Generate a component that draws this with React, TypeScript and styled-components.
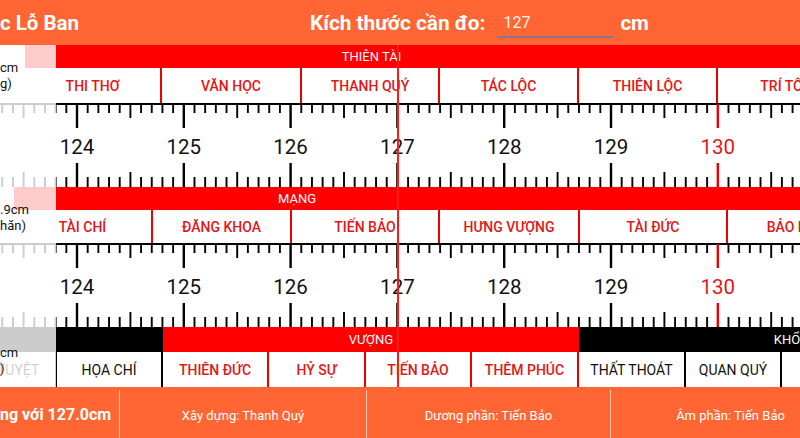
import styled, { createGlobalStyle } from 'styled-components';

const ORANGE = '#ff6633';
const RED = '#ff0000';
const RED_TEXT = '#e01818';

const PX_PER_CM = 106.8;
const cmToX = (v: number) => 77 + (v - 124) * PX_PER_CM;

type Seg = { w: number; bg: string; text?: string };
type Cell = { w: number; text?: string; tone: 'red' | 'black' | 'none' };

const sections: {
  note: string[];
  noteTop: number;
  bandH: number;
  rowH: number;
  rowOffset: number;
  band: Seg[];
  cells: Cell[];
  scale: boolean;
}[] = [
  {
    note: ['cm', 'g)'],
    noteTop: 15,
    bandH: 23,
    rowH: 35,
    rowOffset: 0,
    band: [
      { w: 25, bg: '#fff' },
      { w: 693, bg: RED, text: 'THIÊN TÀI' },
      { w: 695, bg: RED },
    ],
    cells: [
      { w: 25, tone: 'none' },
      { w: 137, text: 'THI THƠ', tone: 'red' },
      { w: 140, text: 'VĂN HỌC', tone: 'red' },
      { w: 138, text: 'THANH QUÝ', tone: 'red' },
      { w: 139, text: 'TÁC LỘC', tone: 'red' },
      { w: 139, text: 'THIÊN LỘC', tone: 'red' },
      { w: 139, text: 'TRÍ TÔN', tone: 'red' },
    ],
    scale: true,
  },
  {
    note: ['.9cm', 'hăn)'],
    noteTop: 15,
    bandH: 23,
    rowH: 33,
    rowOffset: 0,
    band: [
      { w: 14, bg: '#fff' },
      { w: 566, bg: RED, text: 'MẠNG' },
      { w: 600, bg: RED },
    ],
    cells: [
      { w: 14, tone: 'none' },
      { w: 139, text: 'TÀI CHÍ', tone: 'red' },
      { w: 139, text: 'ĐĂNG KHOA', tone: 'red' },
      { w: 148, text: 'TIẾN BẢO', tone: 'red' },
      { w: 140, text: 'HƯNG VƯỢNG', tone: 'red' },
      { w: 148, text: 'TÀI ĐỨC', tone: 'red' },
      { w: 139, text: 'BẢO KHỐ', tone: 'red' },
    ],
    scale: true,
  },
  {
    note: ['cm', ')'],
    noteTop: 18,
    bandH: 25,
    rowH: 35,
    rowOffset: -40,
    band: [
      { w: 163, bg: '#000' },
      { w: 416, bg: RED, text: 'VƯỢNG' },
      { w: 416, bg: '#000', text: 'KHỔ' },
    ],
    cells: [
      { w: 97, text: 'TỬ TUYỆT', tone: 'black' },
      { w: 106, text: 'HỌA CHÍ', tone: 'black' },
      { w: 106, text: 'THIÊN ĐỨC', tone: 'red' },
      { w: 97, text: 'HỶ SỰ', tone: 'red' },
      { w: 106, text: 'TIẾN BẢO', tone: 'red' },
      { w: 107, text: 'THÊM PHÚC', tone: 'red' },
      { w: 107, text: 'THẤT THOÁT', tone: 'black' },
      { w: 96, text: 'QUAN QUÝ', tone: 'black' },
      { w: 106, text: 'KIẾP TÀI', tone: 'black' },
    ],
    scale: false,
  },
];

const GlobalStyle = createGlobalStyle`
  html, body {
    margin: 0;
    width: 800px;
    height: 438px;
    overflow: hidden;
    background: #fff;
    font-family: Roboto, "Noto Sans", "Liberation Sans", sans-serif;
  }
`;

const Page = styled.div`
  width: 800px;
  height: 438px;
  display: flex;
  flex-direction: column;
  overflow: hidden;
`;

const Header = styled.header`
  height: 45px;
  flex: none;
  display: flex;
  align-items: center;
  background: ${ORANGE};
  color: #fff;
`;

const Title = styled.h1`
  flex: none;
  width: 310px;
  margin: 0;
  font-size: 20.5px;
  font-weight: 700;
`;

const FieldLabel = styled.span`
  font-size: 20.8px;
  font-weight: 700;
`;

const SizeInput = styled.input`
  width: 117px;
  margin-left: 12px;
  margin-top: 6px;
  padding: 0 0 4px 6px;
  box-sizing: border-box;
  border: none;
  border-bottom: 2px solid #85778f;
  background: transparent;
  color: #fff3ec;
  font-family: inherit;
  font-size: 16px;
  outline: none;
`;

const Unit = styled.span`
  margin-left: 6px;
  font-size: 20.5px;
  font-weight: 700;
`;

const RulerArea = styled.div`
  position: relative;
  flex: none;
  overflow: hidden;
`;

const Section = styled.section`
  position: relative;
`;

const Band = styled.div<{ $h: number }>`
  display: flex;
  height: ${(p) => p.$h}px;
`;

const BandSeg = styled.div<{ $w: number; $bg: string }>`
  flex: none;
  width: ${(p) => p.$w}px;
  background: ${(p) => p.$bg};
  color: #fff;
  font-size: 13px;
  display: flex;
  align-items: center;
  justify-content: center;
  white-space: nowrap;
`;

const LabelRow = styled.div<{ $h: number; $offset: number }>`
  display: flex;
  height: ${(p) => p.$h}px;
  margin-left: ${(p) => p.$offset}px;
  background: #fff;
`;

const toneColor = { red: RED_TEXT, black: '#111', none: 'transparent' };
const borderColor = { red: '#e00', black: '#000', none: 'transparent' };

const LabelCell = styled.div<{ $w: number; $tone: Cell['tone'] }>`
  flex: none;
  box-sizing: border-box;
  width: ${(p) => p.$w}px;
  border-right: 2px solid ${(p) => borderColor[p.$tone]};
  color: ${(p) => toneColor[p.$tone]};
  font-size: 14px;
  font-weight: ${(p) => (p.$tone === 'red' ? 500 : 400)};
  display: flex;
  align-items: center;
  justify-content: center;
  white-space: nowrap;
`;

const ScaleSvg = styled.svg`
  display: block;
  background: #fff;
`;

const Fade = styled.div`
  position: absolute;
  left: 0;
  top: 0;
  bottom: 0;
  width: 56px;
  background: rgba(255, 255, 255, 0.8);
`;

const SideNote = styled.div<{ $top: number }>`
  position: absolute;
  left: 0;
  top: ${(p) => p.$top}px;
  font-size: 13px;
  line-height: 16px;
  color: #111;
`;

const Indicator = styled.div`
  position: absolute;
  left: 397px;
  top: 0;
  bottom: 0;
  width: 2px;
  background: #ff1a1a;
`;

const Footer = styled.footer`
  flex: 1;
  display: flex;
  background: ${ORANGE};
  color: #fff;
  overflow: hidden;
`;

const FooterCell = styled.div<{ $w: number; $main?: boolean }>`
  flex: none;
  width: ${(p) => p.$w}px;
  box-sizing: border-box;
  display: flex;
  align-items: center;
  justify-content: ${(p) => (p.$main ? 'flex-start' : 'center')};
  font-size: ${(p) => (p.$main ? '16px' : '13px')};
  font-weight: ${(p) => (p.$main ? 700 : 400)};
  white-space: nowrap;
  padding-top: 3px;
  & + & {
    border-left: 1px solid rgba(255, 235, 220, 0.75);
    margin-top: 3px;
  }
`;

function Scale() {
  const ticks = [];
  for (let i = 1230; i <= 1310; i++) {
    const x = cmToX(i / 10);
    if (x < -3 || x > 803) continue;
    const cm = i % 10 === 0;
    const half = i % 5 === 0;
    const color = i === 1300 ? '#e00' : '#000';
    const w = cm ? 2.4 : 1.9;
    const top = cm ? 24 : half ? 14 : 9;
    const bot = cm ? 24 : half ? 15 : 10;
    ticks.push(
      <line key={`t${i}`} x1={x} x2={x} y1={1} y2={1 + top} stroke={color} strokeWidth={w} />,
      <line key={`b${i}`} x1={x} x2={x} y1={84 - bot} y2={84} stroke={color} strokeWidth={w} />
    );
  }
  const nums = [124, 125, 126, 127, 128, 129, 130];
  return (
    <ScaleSvg width={800} height={84} viewBox="0 0 800 84">
      <line x1={0} x2={800} y1={1} y2={1} stroke="#000" strokeWidth={2} />
      {ticks}
      {nums.map((n) => (
        <text
          key={n}
          x={cmToX(n)}
          y={51}
          textAnchor="middle"
          fontSize={20.5}
          fontFamily="Roboto, sans-serif"
          fill={n === 130 ? RED_TEXT : '#111'}
        >
          {n}
        </text>
      ))}
    </ScaleSvg>
  );
}

export default function App() {
  return (
    <Page>
      <GlobalStyle />
      <Header>
        <Title>c Lỗ Ban</Title>
        <FieldLabel>Kích thước cần đo:</FieldLabel>
        <SizeInput readOnly value="127" />
        <Unit>cm</Unit>
      </Header>

      <RulerArea>
        {sections.map((s, idx) => (
          <Section key={idx}>
            <Band $h={s.bandH}>
              {s.band.map((b, i) => (
                <BandSeg key={i} $w={b.w} $bg={b.bg}>
                  {b.text}
                </BandSeg>
              ))}
            </Band>
            <LabelRow $h={s.rowH} $offset={s.rowOffset}>
              {s.cells.map((c, i) => (
                <LabelCell key={i} $w={c.w} $tone={c.tone}>
                  {c.text}
                </LabelCell>
              ))}
            </LabelRow>
            {s.scale && <Scale />}
            <Fade />
            <SideNote $top={s.noteTop}>
              {s.note.map((n) => (
                <div key={n}>{n}</div>
              ))}
            </SideNote>
          </Section>
        ))}
        <Indicator />
      </RulerArea>

      <Footer>
        <FooterCell $w={119} $main>
          ng với 127.0cm
        </FooterCell>
        <FooterCell $w={247}>Xây dựng: Thanh Quý</FooterCell>
        <FooterCell $w={244}>Dương phần: Tiến Bảo</FooterCell>
        <FooterCell $w={240}>Âm phần: Tiến Bảo</FooterCell>
      </Footer>
    </Page>
  );
}
